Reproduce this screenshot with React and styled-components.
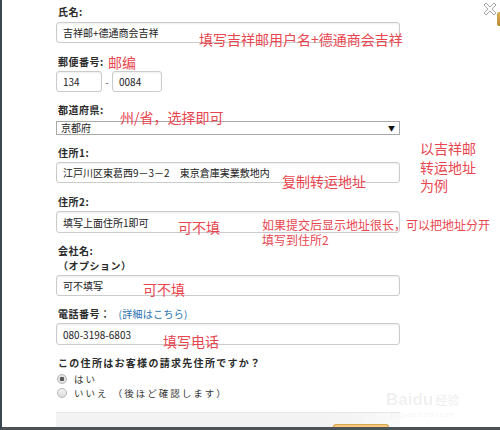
import styled, { createGlobalStyle } from "styled-components";

const Global = createGlobalStyle`
  html, body {
    margin: 0;
    padding: 0;
    background: #fff;
    overflow: hidden;
  }
`;

const Frame = styled.div`
  position: relative;
  width: 500px;
  height: 430px;
  box-sizing: border-box;
  border-left: 2px solid #3b4651;
  border-bottom: 3px solid #4d5257;
  background: #fff;
  overflow: hidden;
  font-family: "Noto Sans CJK JP", "Noto Sans", sans-serif;
  color: #222;
`;

const Form = styled.div`
  width: 344px;
  padding: 5px 0 0 54px;
  display: flex;
  flex-direction: column;
`;

const Group = styled.div`
  display: flex;
  flex-direction: column;
  margin-bottom: ${p => p.gap || 11}px;
`;

const Label = styled.div`
  font-size: 10px;
  font-weight: 700;
  line-height: 14px;
  letter-spacing: 0.5px;
  color: #2b2b2b;
  margin-bottom: ${p => p.below ?? 2}px;
  padding-left: 2px;
`;

const Hint = styled.span`
  font-weight: 400;
  color: #2a72ad;
  margin-left: 8px;
  letter-spacing: 0.3px;
`;

const TextBox = styled.div`
  box-sizing: border-box;
  width: ${p => p.w ? `${p.w}px` : "100%"};
  height: ${p => p.h || 21}px;
  border: 1px solid #cbcbcb;
  border-radius: 3px;
  box-shadow: inset 0 1px 2px rgba(0, 0, 0, 0.07);
  display: flex;
  align-items: center;
  padding: 0 6px;
  font-size: 10px;
  color: #222;
  white-space: nowrap;
`;

const PostalRow = styled.div`
  display: flex;
  align-items: center;
  gap: 3px;
`;

const Dash = styled.span`
  font-size: 10px;
  color: #555;
  width: 4px;
  text-align: center;
`;

const Select = styled.div`
  box-sizing: border-box;
  height: 14px;
  border: 1px solid #a8a8a8;
  display: flex;
  align-items: center;
  justify-content: space-between;
  padding: 0 4px;
  font-size: 10px;
  line-height: 12px;
`;

const Arrow = styled.span`
  font-size: 7px;
  color: #111;
`;

const Question = styled.div`
  font-size: 10px;
  font-weight: 700;
  line-height: 14px;
  letter-spacing: 1.3px;
  color: #2b2b2b;
  padding-left: 2px;
`;

const RadioRow = styled.div`
  display: flex;
  align-items: center;
  gap: 7px;
  height: 14px;
  padding-left: 1px;
  margin-top: ${p => p.top || 0}px;
  font-size: 9.5px;
  letter-spacing: 2px;
  color: #333;
`;

const Radio = styled.span`
  box-sizing: border-box;
  width: 10px;
  height: 10px;
  border-radius: 50%;
  border: 1px solid #b5b5b5;
  background: ${p => (p.on ? "radial-gradient(circle, #555 0 2px, #e2e2e2 2.5px)" : "linear-gradient(#f4f4f4, #dcdcdc)")};
`;

const Footer = styled.div`
  margin-top: 12px;
  height: 16px;
  border-top: 1px solid #e7e7e7;
  background: linear-gradient(90deg, #f3f3f3 0%, #f3f3f3 80%, #fafafa 100%);
  display: flex;
  justify-content: flex-end;
  align-items: flex-end;
  padding-right: 11px;
`;

const SubmitTop = styled.div`
  width: 54px;
  height: 4px;
  border: 1px solid #d6a552;
  border-bottom: none;
  border-radius: 3px 3px 0 0;
  background: #f8ca7e;
`;

const Note = styled.div`
  position: absolute;
  left: ${p => p.x}px;
  top: ${p => p.y}px;
  font-family: "Noto Sans CJK SC", "Noto Sans", sans-serif;
  font-size: ${p => p.size || 14}px;
  line-height: ${p => p.lh || 18}px;
  color: #e8464f;
  white-space: nowrap;
`;

const Close = styled.svg`
  position: absolute;
  right: 3px;
  top: 2px;
`;

const Sliver = styled.div`
  position: absolute;
  right: 0;
  top: 12px;
  width: 3px;
  height: 14px;
  border-radius: 2px 0 0 2px;
  background: linear-gradient(#d9b25a, #b98a34);
`;

const Watermark = styled.div`
  position: absolute;
  left: 384px;
  top: 392px;
  display: flex;
  flex-direction: column;
  align-items: center;
  color: rgba(0, 0, 0, 0.07);
  font-family: "Liberation Sans", Arial, sans-serif;
  pointer-events: none;
`;

const Mark = styled.div`
  display: flex;
  align-items: flex-end;
  font-size: 17px;
  font-weight: 700;
  line-height: 16px;
  span:last-child {
    font-family: "Noto Sans CJK SC", sans-serif;
    font-size: 12px;
    margin-left: 2px;
  }
`;

const Site = styled.div`
  font-size: 8px;
  margin-top: 2px;
`;

export default function App() {
  return (
    <Frame>
      <Global />
      <Form>
        <Group gap={12}>
          <Label below={3}>氏名:</Label>
          <TextBox><span>吉祥邮+德通商会吉祥</span></TextBox>
        </Group>
        <Group>
          <Label>郵便番号:</Label>
          <PostalRow>
            <TextBox w={46}><span>134</span></TextBox>
            <Dash>-</Dash>
            <TextBox w={50}><span>0084</span></TextBox>
          </PostalRow>
        </Group>
        <Group>
          <Label below={4}>都道府県:</Label>
          <Select>
            <span>京都府</span>
            <Arrow>▼</Arrow>
          </Select>
        </Group>
        <Group gap={12}>
          <Label>住所1:</Label>
          <TextBox><span>江戸川区東葛西9－3－2　東京倉庫実業敷地内</span></TextBox>
        </Group>
        <Group>
          <Label>住所2:</Label>
          <TextBox h={22}><span>填写上面住所1即可</span></TextBox>
        </Group>
        <Group>
          <Label below={1}>会社名:</Label>
          <Label>（オプション）</Label>
          <TextBox><span>可不填写</span></TextBox>
        </Group>
        <Group>
          <Label>電話番号：<Hint>(詳細はこちら)</Hint></Label>
          <TextBox h={22}><span>080-3198-6803</span></TextBox>
        </Group>
        <Question>この住所はお客様の請求先住所ですか？</Question>
        <RadioRow top={2}>
          <Radio on />
          <span>はい</span>
        </RadioRow>
        <RadioRow>
          <Radio />
          <span>いいえ （後ほど確認します）</span>
        </RadioRow>
        <Footer>
          <SubmitTop />
        </Footer>
      </Form>

      <Note x={197} y={30}>填写吉祥邮用户名+德通商会吉祥</Note>
      <Note x={106} y={53}>邮编</Note>
      <Note x={118} y={108}>州/省，选择即可</Note>
      <Note x={418} y={139} lh={18.5}>以吉祥邮<br />转运地址<br />为例</Note>
      <Note x={280} y={172}>复制转运地址</Note>
      <Note x={176} y={218}>可不填</Note>
      <Note x={260} y={218} size={12} lh={14.5}>如果提交后显示地址很长，可以把地址分开<br />填写到住所2</Note>
      <Note x={141} y={280}>可不填</Note>
      <Note x={161} y={332}>填写电话</Note>

      <Close width="14" height="14" viewBox="0 0 14 14">
        <path
          d="M3 1 L7 5 L11 1 L13 3 L9 7 L13 11 L11 13 L7 9 L3 13 L1 11 L5 7 L1 3 Z"
          fill="#fff"
          stroke="#a9a9a9"
          strokeWidth="1"
          strokeLinejoin="round"
        />
      </Close>
      <Sliver />

      <Watermark>
        <Mark>
          <span>Baidu</span>
          <span>经验</span>
        </Mark>
        <Site>jingyan.baidu.com</Site>
      </Watermark>
    </Frame>
  );
}
